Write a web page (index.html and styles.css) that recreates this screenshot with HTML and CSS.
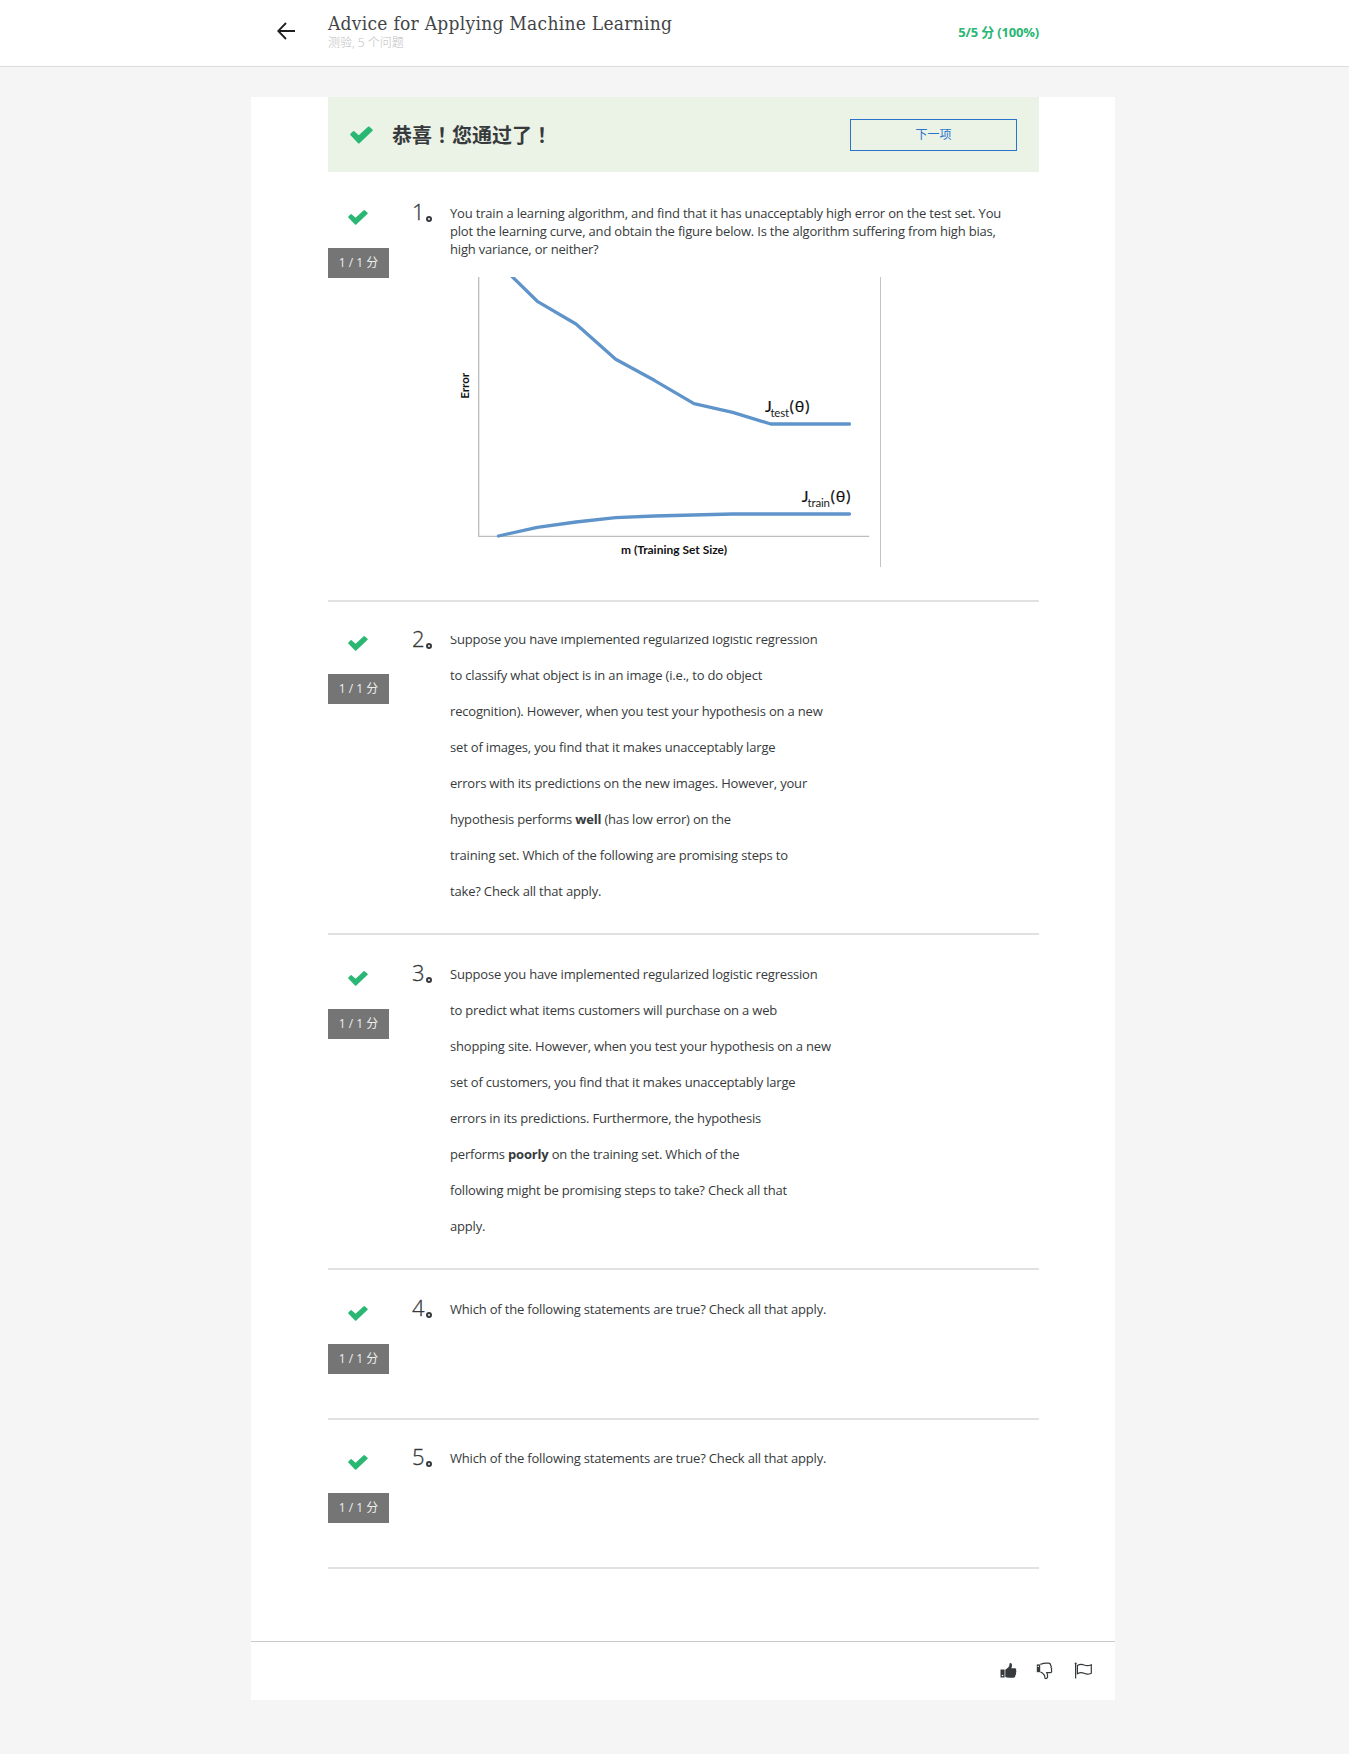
FILE: index.html
```html
<!DOCTYPE html>
<html lang="zh-CN">
<head>
<meta charset="utf-8">
<title>Advice for Applying Machine Learning</title>
<link rel="stylesheet" href="styles.css">
</head>
<body>
<svg class="defs" aria-hidden="true">
  <symbol id="check" viewBox="0 0 20 15">
    <path d="M0.3 7.5 Q0 7 .4 6.5 L2.7 4.3 Q3.3 3.9 3.9 4.4 L7.6 7.7 L15.7.3 Q16.3-.1 16.9.4 L19.6 2.8 Q20 3.3 19.6 3.8 L8.3 14.6 Q7.6 15.1 7 14.6 Z"/>
  </symbol>
</svg>
<header class="header">
  <div class="header-inner">
    <svg class="back" viewBox="0 0 18 18"><path d="M18 9H1.5M9 1L1.2 9L9 17"/></svg>
    <div class="heading">
      <h1 class="title">Advice for Applying Machine Learning</h1>
      <div class="subtitle">测验, 5 个问题</div>
    </div>
    <div class="score">5/5 分 (100%)</div>
  </div>
</header>
<main class="panel">
  <div class="content">
    <section class="banner">
      <svg class="banner-check"><use href="#check"/></svg>
      <h2 class="banner-title">恭喜<span class="mark" lang="zh-TW">！</span>您通过了<span class="mark" lang="zh-TW">！</span></h2>
      <button class="next">下一项</button>
    </section>

    <section class="question q1">
      <div class="status"><svg class="check"><use href="#check"/></svg><span class="points">1 / 1 分</span></div>
      <div class="number">1<i class="stop"></i></div>
      <div class="body">
        <p>You train a learning algorithm, and find that it has unacceptably high error on the test set. You<br>plot the learning curve, and obtain the figure below. Is the algorithm suffering from high bias,<br>high variance, or neither?</p>
        <svg class="chart" viewBox="0 0 432 290">
          <path class="axis" d="M28.7 0V259.3H419.3"/>
          <path class="edge" d="M430.5 0V290"/>
          <path class="curve" d="M61 -1.5L87.3 24.3L126 47L165.7 82.3L204.3 103.3L244 126.7L282.7 135.3L320.7 147H399.5"/>
          <path class="curve" d="M48.5 259L87.3 250.3L126 245L165.7 240.7L204.3 239L282.7 237H399.5"/>
          <text class="label" x="315" y="135.3" textLength="5">J</text>
          <text class="sub" x="320.5" y="139.7" textLength="18.5">test</text>
          <text class="label" x="339.5" y="135.3" textLength="20">(θ)</text>
          <text class="label" x="351.7" y="225.3" textLength="5">J</text>
          <text class="sub" x="357.5" y="229.7" textLength="22.5">train</text>
          <text class="label" x="380.5" y="225.3" textLength="20">(θ)</text>
          <text class="caption" transform="translate(19.3 121.8) rotate(-90)" textLength="26" lengthAdjust="spacingAndGlyphs">Error</text>
          <text class="caption" x="171" y="276.8" textLength="106" lengthAdjust="spacingAndGlyphs">m (Training Set Size)</text>
        </svg>
      </div>
    </section>

    <section class="question q2">
      <div class="status"><svg class="check"><use href="#check"/></svg><span class="points">1 / 1 分</span></div>
      <div class="number">2<i class="stop"></i></div>
      <div class="body clipped">
        <p>Suppose you have implemented regularized logistic regression</p>
        <p>to classify what object is in an image (i.e., to do object</p>
        <p>recognition). However, when you test your hypothesis on a new</p>
        <p>set of images, you find that it makes unacceptably large</p>
        <p>errors with its predictions on the new images. However, your</p>
        <p>hypothesis performs <b>well</b> (has low error) on the</p>
        <p>training set. Which of the following are promising steps to</p>
        <p>take? Check all that apply.</p>
      </div>
    </section>

    <section class="question q3">
      <div class="status"><svg class="check"><use href="#check"/></svg><span class="points">1 / 1 分</span></div>
      <div class="number">3<i class="stop"></i></div>
      <div class="body">
        <p>Suppose you have implemented regularized logistic regression</p>
        <p>to predict what items customers will purchase on a web</p>
        <p>shopping site. However, when you test your hypothesis on a new</p>
        <p>set of customers, you find that it makes unacceptably large</p>
        <p>errors in its predictions. Furthermore, the hypothesis</p>
        <p>performs <b>poorly</b> on the training set. Which of the</p>
        <p>following might be promising steps to take? Check all that</p>
        <p>apply.</p>
      </div>
    </section>

    <section class="question q4">
      <div class="status"><svg class="check"><use href="#check"/></svg><span class="points">1 / 1 分</span></div>
      <div class="number">4<i class="stop"></i></div>
      <div class="body"><p>Which of the following statements are true? Check all that apply.</p></div>
    </section>

    <section class="question q5">
      <div class="status"><svg class="check"><use href="#check"/></svg><span class="points">1 / 1 分</span></div>
      <div class="number">5<i class="stop"></i></div>
      <div class="body"><p>Which of the following statements are true? Check all that apply.</p></div>
    </section>
  </div>
  <footer class="feedback">
    <svg class="icon" viewBox="0 0 18 18">
      <path class="solid" d="M.5 7.6H4.6V15.5H.5ZM5.3 7.8L8.2 5.6Q9.5 4 9.7 1.2Q11.7.4 12 2.8Q12.2 4.3 11.3 6.3H15.2Q17 6.8 16 8.6Q17 9.8 15.9 11Q16.6 12.2 15.4 13.3Q15.6 15.6 13.6 15.8H9Q7 15.6 5.3 14.9Z"/>
      <circle cx="2.5" cy="13.5" r=".8" fill="#fff"/>
    </svg>
    <svg class="icon" viewBox="0 0 18 18">
      <path class="solid" d="M.8 2.4H4.2V10.2H.8Z"/><circle cx="2.3" cy="4.4" r=".7" fill="#fff"/>
      <path class="line" d="M4.4 2.4Q7.5 1.1 10.5 1.1H12.5Q14.6 1.1 14.6 3.2Q15.8 4.2 15 5.5Q16.2 6.7 15.4 8Q16.4 10.6 14 10.7H10.8Q12 13 11.5 15.3Q10.8 17.3 9 16.3Q9 13.5 7.7 12.3Q6.2 10.3 4.4 10.1"/>
    </svg>
    <svg class="icon flag" viewBox="0 0 19 18">
      <path class="line" d="M1.6 1V16.5M3.4 3.4Q6.8 1.5 10.2 3Q13.6 4.4 17.3 2.7V11.2Q13.6 13 10.2 11.3Q6.8 9.8 3.4 11.7Z"/><circle class="solid" cx="1.6" cy="1.4" r="1"/>
    </svg>
  </footer>
</main>
</body>
</html>
```
FILE: styles.css
```css
* { box-sizing: border-box; }

body {
  margin: 0;
  min-height: 1754px;
  background: #f5f5f5;
  color: #373a3c;
  font: 13px/18px "Open Sans", "Noto Sans CJK SC", sans-serif;
}

h1, h2, p { margin: 0; font-weight: 400; }
svg { display: block; }
.defs { display: none; }

.header {
  height: 67px;
  background: #fff;
  border-bottom: 1px solid #dcdcdc;
}
.header-inner {
  display: flex;
  width: 762px;
  margin-left: 277px;
}
.back {
  width: 18px;
  height: 18px;
  margin-top: 22px;
  fill: none;
  stroke: #1f1f1f;
  stroke-width: 1.8;
}
.heading { flex: 1; margin-left: 33px; padding-top: 11px; }
.title {
  color: #424547;
  font: 19px/24px "DejaVu Serif Condensed", "DejaVu Serif", serif;
  font-stretch: condensed;
  letter-spacing: 0.27px;
  white-space: nowrap;
}
.subtitle {
  color: #bdbdbd;
  font-size: 12px;
  font-weight: 300;
  line-height: 16px;
}
.score {
  padding-top: 23px;
  color: #2ab673;
  font-size: 13px;
  font-weight: 700;
  letter-spacing: -0.17px;
}

.panel {
  width: 864px;
  height: 1603px;
  margin: 30px 0 0 251px;
  background: #fff;
  display: flex;
  flex-direction: column;
}
.content { width: 711px; margin-left: 77px; }

.banner {
  display: flex;
  align-items: center;
  height: 75px;
  padding: 0 22px;
  background: #ebf3e7;
}
.banner-check { width: 23px; height: 18px; fill: #2ab673; }
.banner-title {
  flex: 1;
  margin-left: 19px;
  font: 700 20px/28px "Noto Sans CJK SC", sans-serif;
}
.mark { font-family: "Noto Sans CJK TC", sans-serif; }
.next {
  width: 167px;
  height: 32px;
  padding: 0 0 2px;
  border: 1px solid #2a73cc;
  background: none;
  color: #2a73cc;
  font: 12px/18px "Noto Sans CJK SC", sans-serif;
}

.question {
  display: grid;
  grid-template-columns: 61px 23px 38px 1fr;
  align-items: start;
  border-bottom: 2px solid #e1e1e1;
}
.q1 { height: 430px; padding-top: 24px; }
.q2 { height: 333px; padding-top: 20px; }
.q3 { height: 335px; padding-top: 22px; }
.q4 { height: 150px; padding-top: 22px; }
.q5 { height: 149px; padding-top: 21px; }

.status {
  display: flex;
  flex-direction: column;
  align-items: flex-start;
  gap: 23px;
  padding-top: 14px;
}
.check { width: 20px; height: 15px; margin-left: 20px; fill: #2ab673; }
.points {
  width: 61px;
  height: 30px;
  background: #757575;
  color: #eee;
  font-size: 12px;
  line-height: 30px;
  text-align: center;
}
.number {
  grid-column: 3;
  display: flex;
  align-items: flex-end;
  font-size: 22px;
  font-weight: 300;
  line-height: 30px;
  -webkit-text-stroke: 0.3px #373a3c;
}
.q2 .number { padding-top: 1px; }
.stop {
  width: 6px;
  height: 6px;
  margin: 0 0 4px 1.5px;
  border: 2px solid #373a3c;
  border-radius: 50%;
}
.body { padding-top: 8px; white-space: nowrap; letter-spacing: -0.184px; }
.body p + p { margin-top: 18px; }
.clipped { clip-path: inset(14px 0 0 0); }

.chart { width: 432px; height: 290px; margin-top: 19px; letter-spacing: 0; }
.axis { fill: none; stroke: #bdbdbd; stroke-width: 1.3; }
.edge { stroke: #c4c4c4; }
.curve { fill: none; stroke: #5f94ca; stroke-width: 3.3; stroke-linejoin: round; stroke-linecap: round; }
.label { font: 16px Lato, "Open Sans", sans-serif; fill: #111; stroke: #111; stroke-width: 0.2; }
.sub { font: 11.5px Lato, sans-serif; fill: #222; }
.caption { font: 700 11px Lato, sans-serif; fill: #111; }

.feedback {
  display: flex;
  justify-content: flex-end;
  gap: 18px;
  height: 59px;
  margin-top: auto;
  padding: 20px 22px 0 0;
  border-top: 1px solid #c9c9c9;
}
.icon { width: 18px; height: 18px; }
.flag { width: 19px; margin-left: 2px; }
.solid { fill: #373a3c; }
.line { fill: none; stroke: #373a3c; stroke-width: 1.2; }
```
